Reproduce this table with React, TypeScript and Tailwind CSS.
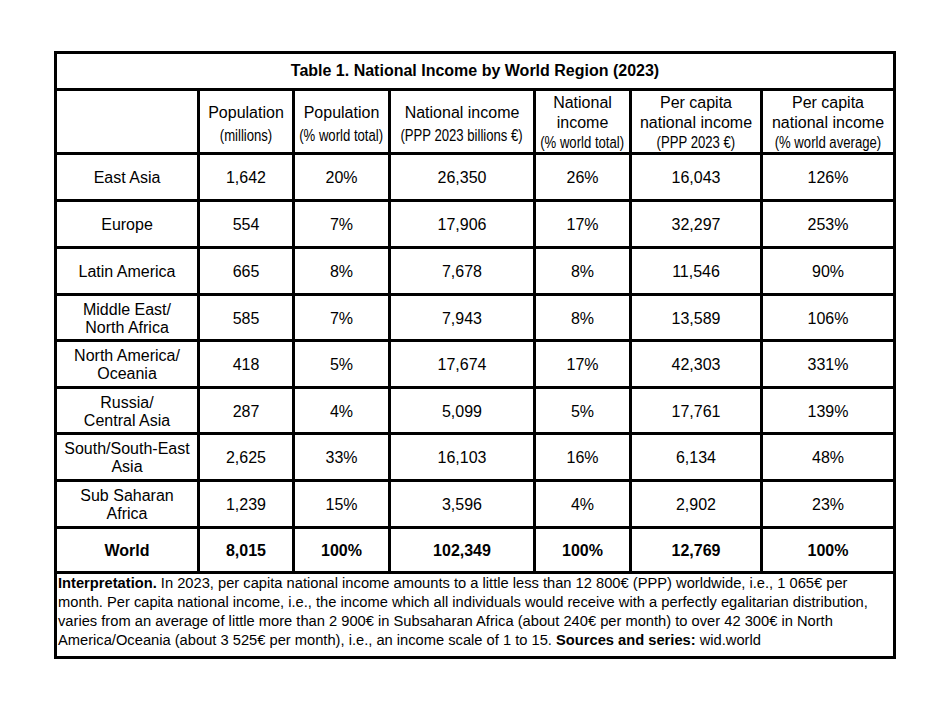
import React from 'react';

// One region row of the table
interface Row {
  region: string[];
  pop: string;
  popShare: string;
  income: string;
  incomeShare: string;
  perCapita: string;
  perCapitaShare: string;
}

const rows: Row[] = [
  { region: ['East Asia'], pop: '1,642', popShare: '20%', income: '26,350', incomeShare: '26%', perCapita: '16,043', perCapitaShare: '126%' },
  { region: ['Europe'], pop: '554', popShare: '7%', income: '17,906', incomeShare: '17%', perCapita: '32,297', perCapitaShare: '253%' },
  { region: ['Latin America'], pop: '665', popShare: '8%', income: '7,678', incomeShare: '8%', perCapita: '11,546', perCapitaShare: '90%' },
  { region: ['Middle East/', 'North Africa'], pop: '585', popShare: '7%', income: '7,943', incomeShare: '8%', perCapita: '13,589', perCapitaShare: '106%' },
  { region: ['North America/', 'Oceania'], pop: '418', popShare: '5%', income: '17,674', incomeShare: '17%', perCapita: '42,303', perCapitaShare: '331%' },
  { region: ['Russia/', 'Central Asia'], pop: '287', popShare: '4%', income: '5,099', incomeShare: '5%', perCapita: '17,761', perCapitaShare: '139%' },
  { region: ['South/South-East', 'Asia'], pop: '2,625', popShare: '33%', income: '16,103', incomeShare: '16%', perCapita: '6,134', perCapitaShare: '48%' },
  { region: ['Sub Saharan', 'Africa'], pop: '1,239', popShare: '15%', income: '3,596', incomeShare: '4%', perCapita: '2,902', perCapitaShare: '23%' },
];

const cell = 'bg-white flex flex-col items-center justify-center pt-[2px] text-center text-[16px]';
// unit lines are set narrow, like Arial Narrow
const narrow = 'inline-block origin-center scale-x-[0.82] text-[16px] whitespace-nowrap';

// Header cell with a big label and a narrow unit line
const Head2 = ({ top, sub }: { top: string; sub: string }) => (
  <div className="bg-white flex flex-col items-center pt-[10px] text-center">
    <div className="text-[16px] leading-[24px] whitespace-nowrap">{top}</div>
    <div className={narrow + ' leading-[22px]'}>{sub}</div>
  </div>
);

const Head3 = ({ a, b, sub }: { a: string; b: string; sub: string }) => (
  <div className="bg-white flex flex-col items-center pt-[2px] text-center">
    <div className="text-[16px] leading-[20px] whitespace-nowrap">{a}</div>
    <div className="text-[16px] leading-[20px] whitespace-nowrap">{b}</div>
    <div className={narrow + ' leading-[20px]'}>{sub}</div>
  </div>
);

export default function App() {
  return (
    <div className="min-h-screen bg-white pt-[51px] pl-[54px] text-black font-['Liberation_Sans',Arial,sans-serif]">
      <div className="w-[842px] border-[3px] border-black bg-black grid gap-[3px] grid-cols-[140px_92px_93px_142px_93px_128px_130px] grid-rows-[34px_61px_44px_44px_44px_43px_44px_43px_44px_44px_42px_82px]">
        {/* Title */}
        <div className="col-span-7 bg-white flex items-center justify-center text-[16px] font-bold">
          Table 1. National Income by World Region (2023)
        </div>

        {/* Column headers */}
        <div className="bg-white" />
        <Head2 top="Population" sub="(millions)" />
        <Head2 top="Population" sub="(% world total)" />
        <Head2 top="National income" sub="(PPP 2023 billions €)" />
        <Head3 a="National" b="income" sub="(% world total)" />
        <Head3 a="Per capita" b="national income" sub="(PPP 2023 €)" />
        <Head3 a="Per capita" b="national income" sub="(% world average)" />

        {/* Regions */}
        {rows.map((r) => (
          <React.Fragment key={r.region.join(' ')}>
            <div className={cell + ' leading-[18px]'}>
              {r.region.map((l) => (
                <div key={l} className="whitespace-nowrap">{l}</div>
              ))}
            </div>
            <div className={cell}>{r.pop}</div>
            <div className={cell}>{r.popShare}</div>
            <div className={cell}>{r.income}</div>
            <div className={cell}>{r.incomeShare}</div>
            <div className={cell}>{r.perCapita}</div>
            <div className={cell}>{r.perCapitaShare}</div>
          </React.Fragment>
        ))}

        {/* Total */}
        <div className={cell + ' font-bold'}>World</div>
        <div className={cell + ' font-bold'}>8,015</div>
        <div className={cell + ' font-bold'}>100%</div>
        <div className={cell + ' font-bold'}>102,349</div>
        <div className={cell + ' font-bold'}>100%</div>
        <div className={cell + ' font-bold'}>12,769</div>
        <div className={cell + ' font-bold'}>100%</div>

        {/* Note */}
        <div className="col-span-7 bg-white pl-[1px] text-[14.7px] leading-[19px] whitespace-nowrap">
          <b>Interpretation.</b> In 2023, per capita national income amounts to a little less than 12 800€ (PPP) worldwide, i.e., 1 065€ per
          <br />
          month. Per capita national income, i.e., the income which all individuals would receive with a perfectly egalitarian distribution,
          <br />
          varies from an average of little more than 2 900€ in Subsaharan Africa (about 240€ per month) to over 42 300€ in North
          <br />
          America/Oceania (about 3 525€ per month), i.e., an income scale of 1 to 15. <b>Sources and series:</b> wid.world
        </div>
      </div>
    </div>
  );
}
